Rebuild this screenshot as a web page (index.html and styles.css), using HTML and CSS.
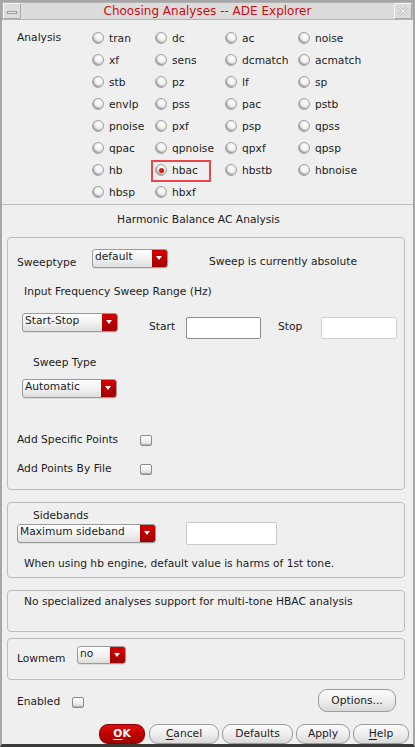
FILE: index.html
```html
<!DOCTYPE html>
<html>
<head>
<meta charset="utf-8">
<title>Choosing Analyses -- ADE Explorer</title>
<link rel="stylesheet" href="styles.css">
</head>
<body>
<div class="window">
  <div class="titlebar">
    <div class="tb-btn tb-min"><span class="minus"></span></div>
    <div class="title">Choosing Analyses -- ADE Explorer</div>
    <div class="tb-btn tb-close">
      <svg width="12" height="12" viewBox="0 0 12 12">
        <path d="M2 2 L10 10 M10 2 L2 10" stroke="#c9c9c9" stroke-width="3" fill="none"/>
        <path d="M2 2 L10 10 M10 2 L2 10" stroke="#f4f4f4" stroke-width="1" fill="none"/>
      </svg>
    </div>
  </div>

  <div class="analysis">
    <div class="an-label">Analysis</div>
    <div class="radio-grid">
      <div class="radio"><span class="rb"></span>tran</div>
      <div class="radio"><span class="rb"></span>dc</div>
      <div class="radio"><span class="rb"></span>ac</div>
      <div class="radio"><span class="rb"></span>noise</div>
      <div class="radio"><span class="rb"></span>xf</div>
      <div class="radio"><span class="rb"></span>sens</div>
      <div class="radio"><span class="rb"></span>dcmatch</div>
      <div class="radio"><span class="rb"></span>acmatch</div>
      <div class="radio"><span class="rb"></span>stb</div>
      <div class="radio"><span class="rb"></span>pz</div>
      <div class="radio"><span class="rb"></span>lf</div>
      <div class="radio"><span class="rb"></span>sp</div>
      <div class="radio"><span class="rb"></span>envlp</div>
      <div class="radio"><span class="rb"></span>pss</div>
      <div class="radio"><span class="rb"></span>pac</div>
      <div class="radio"><span class="rb"></span>pstb</div>
      <div class="radio"><span class="rb"></span>pnoise</div>
      <div class="radio"><span class="rb"></span>pxf</div>
      <div class="radio"><span class="rb"></span>psp</div>
      <div class="radio"><span class="rb"></span>qpss</div>
      <div class="radio"><span class="rb"></span>qpac</div>
      <div class="radio"><span class="rb"></span>qpnoise</div>
      <div class="radio"><span class="rb"></span>qpxf</div>
      <div class="radio"><span class="rb"></span>qpsp</div>
      <div class="radio"><span class="rb"></span>hb</div>
      <div class="radio selected"><span class="rb"></span>hbac<span class="highlight"></span></div>
      <div class="radio"><span class="rb"></span>hbstb</div>
      <div class="radio"><span class="rb"></span>hbnoise</div>
      <div class="radio"><span class="rb"></span>hbsp</div>
      <div class="radio"><span class="rb"></span>hbxf</div>
    </div>
  </div>

  <div class="heading">Harmonic Balance AC Analysis</div>

  <div class="group g1">
    <div class="row sweeptype-row">
      <div class="lbl sweeptype-lbl">Sweeptype</div>
      <div class="combo combo-default"><span class="combo-text">default</span><span class="combo-arrow"></span></div>
      <div class="lbl sweep-info">Sweep is currently absolute</div>
    </div>
    <div class="lbl range-lbl">Input Frequency Sweep Range (Hz)</div>
    <div class="row startstop-row">
      <div class="combo combo-startstop"><span class="combo-text">Start-Stop</span><span class="combo-arrow"></span></div>
      <div class="lbl start-lbl">Start</div>
      <div class="field field-start"></div>
      <div class="lbl stop-lbl">Stop</div>
      <div class="field field-stop"></div>
    </div>
    <div class="lbl sweeptype2-lbl">Sweep Type</div>
    <div class="combo combo-auto"><span class="combo-text">Automatic</span><span class="combo-arrow"></span></div>
    <div class="row check-row first-check">
      <div class="lbl check-lbl">Add Specific Points</div>
      <span class="checkbox"></span>
    </div>
    <div class="row check-row second-check">
      <div class="lbl check-lbl">Add Points By File</div>
      <span class="checkbox"></span>
    </div>
  </div>

  <div class="group g2">
    <div class="lbl sidebands-lbl">Sidebands</div>
    <div class="row sidebands-row">
      <div class="combo combo-side"><span class="combo-text">Maximum sideband</span><span class="combo-arrow"></span></div>
      <div class="field field-side"></div>
    </div>
    <div class="lbl note-lbl">When using hb engine, default value is harms of 1st tone.</div>
  </div>

  <div class="group g3">
    <div class="lbl note2-lbl">No specialized analyses support for multi-tone HBAC analysis</div>
  </div>

  <div class="group g4">
    <div class="row lowmem-row">
      <div class="lbl lowmem-lbl">Lowmem</div>
      <div class="combo combo-no"><span class="combo-text">no</span><span class="combo-arrow"></span></div>
    </div>
  </div>

  <div class="row enabled-row">
    <div class="lbl enabled-lbl">Enabled</div>
    <span class="checkbox enabled-check"></span>
    <div class="btn btn-options">Options...</div>
  </div>

  <div class="row button-row">
    <div class="btn btn-ok"><u>O</u>K</div>
    <div class="btn btn-cancel"><u>C</u>ancel</div>
    <div class="btn btn-defaults">Defaults</div>
    <div class="btn btn-apply">Apply</div>
    <div class="btn btn-help"><u>H</u>elp</div>
  </div>
</div>
</body>
</html>
```

FILE: styles.css
```css
* { box-sizing: border-box; }

html, body {
  margin: 0;
  padding: 0;
  background: #efefef;
}

body {
  font-family: "DejaVu Sans", "Noto Sans", sans-serif;
  font-size: 10.7px;
  color: #1c1c1c;
}

.window {
  width: 415px;
  height: 747px;
  border: 2px solid #a6a6a6;
  border-bottom: 3px solid #3a3a3a;
  background: #efefef;
  display: flex;
  flex-direction: column;
  overflow: hidden;
}

/* ---------- title bar ---------- */
.titlebar {
  height: 18px;
  flex: none;
  display: flex;
  align-items: stretch;
  background: #dcdcdc;
  border: 1px solid #b3b3b3;
}

.tb-btn {
  width: 18px;
  flex: none;
  display: flex;
  align-items: center;
  justify-content: center;
  border: 1px solid #f6f6f6;
  border-right-color: #a9a9a9;
  border-bottom-color: #a9a9a9;
}

.tb-close {
  border-left: 1px solid #f6f6f6;
}

.minus {
  width: 10px;
  height: 3px;
  background: #e9e9e9;
  border: 1px solid #9d9d9d;
  margin-top: 2px;
}

.title {
  flex: 1;
  text-align: center;
  color: #cc0c0c;
  font-size: 12px;
  line-height: 16px;
}

/* ---------- analysis radios ---------- */
.analysis {
  flex: none;
  display: flex;
  padding: 7px 0 1px 15px;
  border-bottom: 1px solid #bdbdbd;
}

.an-label {
  width: 75px;
  line-height: 22px;
}

.radio-grid {
  display: grid;
  grid-template-columns: 63px 70px 73px auto;
  grid-auto-rows: 22px;
}

.radio {
  position: relative;
  display: flex;
  align-items: center;
}

.rb {
  width: 12px;
  height: 12px;
  margin-right: 5px;
  border-radius: 50%;
  border: 1px solid #a3a3a3;
  background: radial-gradient(circle at 58% 35%, #ffffff 0%, #f3f3f3 35%, #d2d2d2 80%, #b9b9b9 100%);
  box-shadow: inset 1px -1px 1px rgba(0, 0, 0, 0.28);
  position: relative;
  flex: none;
}

.selected .rb::after {
  content: "";
  position: absolute;
  left: 2.5px;
  top: 2.5px;
  width: 5px;
  height: 5px;
  border-radius: 50%;
  background: radial-gradient(circle at 40% 35%, #f02020, #b00000);
}

.highlight {
  position: absolute;
  left: -4px;
  top: 1px;
  width: 60px;
  height: 22px;
  border: 2px solid #e9474b;
}

/* ---------- heading ---------- */
.heading {
  flex: none;
  text-align: center;
  padding-right: 18px;
  line-height: 16px;
  margin: 7px 0 9px;
}

/* ---------- groups ---------- */
.group {
  flex: none;
  margin: 0 8px 0 5px;
  border: 1px solid #bdbdbd;
  border-radius: 4px;
}

.lbl {
  line-height: 16px;
  white-space: nowrap;
}

.row {
  display: flex;
  align-items: flex-start;
}

.g1 {
  padding: 11px 0 12px 9px;
  height: 253px;
}

.sweeptype-lbl {
  width: 75px;
  margin-top: 6px;
}

.sweep-info {
  margin-left: 41px;
  margin-top: 5px;
}

.range-lbl {
  margin: 13px 0 0 7px;
}

.startstop-row {
  margin-top: 13px;
}

.start-lbl {
  margin: 6px 0 0 31px;
  width: 37px;
}

.stop-lbl {
  margin: 6px 0 0 17px;
  width: 43px;
}

.sweeptype2-lbl {
  margin: 16px 0 0 16px;
}

.check-row {
  align-items: center;
}

.first-check {
  margin-top: 34px;
}

.second-check {
  margin-top: 13px;
}

.check-lbl {
  width: 123px;
}

/* ---------- combo boxes ---------- */
.combo {
  display: flex;
  height: 19px;
  border: 1px solid #9a9a9a;
  border-radius: 3px;
  overflow: hidden;
  background: linear-gradient(#ffffff, #f2f2f2 50%, #dedede);
  box-shadow: 0 1px 0 rgba(0, 0, 0, 0.08);
  flex: none;
}

.combo-text {
  flex: 1;
  padding-left: 2px;
  line-height: 14px;
  white-space: nowrap;
}

.combo-arrow {
  width: 15px;
  flex: none;
  background: linear-gradient(#d20000, #b70000 60%, #9c0000);
  position: relative;
}

.combo-arrow::after {
  content: "";
  position: absolute;
  left: 4px;
  top: 6px;
  border-left: 3px solid transparent;
  border-right: 3px solid transparent;
  border-top: 4px solid #ffffff;
}

.combo-default { width: 76px; }
.combo-startstop { width: 96px; margin-left: 5px; }
.combo-auto { width: 95px; margin: 8px 0 0 5px; }
.combo-side { width: 139px; margin-top: 2px; }
.combo-no { width: 49px; margin-top: 7px; height: 18px; }

/* ---------- text fields ---------- */
.field {
  height: 22px;
  background: #ffffff;
  border: 1px solid #8f8f8f;
  border-radius: 2px;
  margin-top: 4px;
  flex: none;
}

.field-start { width: 75px; }
.field-stop { width: 76px; border-color: #cfcfcf; }
.field-side { width: 91px; margin: 0 0 0 30px; height: 23px; border-color: #c9c9c9; }

/* ---------- checkboxes ---------- */
.checkbox {
  display: inline-block;
  width: 12px;
  height: 11px;
  border: 1px solid #8c8c8c;
  border-radius: 2px;
  background: linear-gradient(#ffffff, #ececec 60%, #d4d4d4);
  box-shadow: inset 0 -1px 0 rgba(0, 0, 0, 0.18);
  flex: none;
}

/* ---------- group 2 ---------- */
.g2 {
  margin-top: 12px;
  padding: 0 0 6px 9px;
  height: 76px;
}

.sidebands-lbl {
  margin: 5px 0 0 16px;
}

.sidebands-row {
  margin-top: -2px;
}

.note-lbl {
  margin: 11px 0 0 7px;
}

/* ---------- group 3 ---------- */
.g3 {
  margin-top: 12px;
  height: 42px;
  padding: 3px 0 0 16px;
}

/* ---------- group 4 ---------- */
.g4 {
  margin-top: 6px;
  height: 42px;
  padding-left: 9px;
}

.lowmem-lbl {
  width: 60px;
  margin-top: 12px;
}

/* ---------- bottom ---------- */
.enabled-row {
  flex: none;
  margin-top: 9px;
  padding: 0 17px 0 15px;
}

.enabled-lbl {
  width: 55px;
  margin-top: 5px;
}

.enabled-check {
  margin-top: 8px;
}

.btn {
  height: 20px;
  border: 1px solid #9b9b9b;
  border-radius: 9px;
  background: linear-gradient(#fbfbfb, #eeeeee 50%, #d9d9d9);
  text-align: center;
  line-height: 18px;
  white-space: nowrap;
  flex: none;
}

.btn u {
  text-decoration: underline;
  text-underline-offset: 2px;
}

.btn-options {
  margin-left: auto;
  width: 78px;
  height: 23px;
  line-height: 21px;
}

.button-row {
  flex: none;
  margin-top: 12px;
  padding-right: 4px;
  justify-content: flex-end;
  gap: 3px;
}

.btn-ok {
  width: 46px;
  margin-right: 1px;
  border-color: #8a0000;
  background: linear-gradient(#dc1010, #c00000 50%, #a00000);
  color: #ffffff;
  font-weight: bold;
}

.btn-cancel { width: 70px; }
.btn-defaults { width: 71px; }
.btn-apply { width: 54px; }
.btn-help { width: 56px; }
```
